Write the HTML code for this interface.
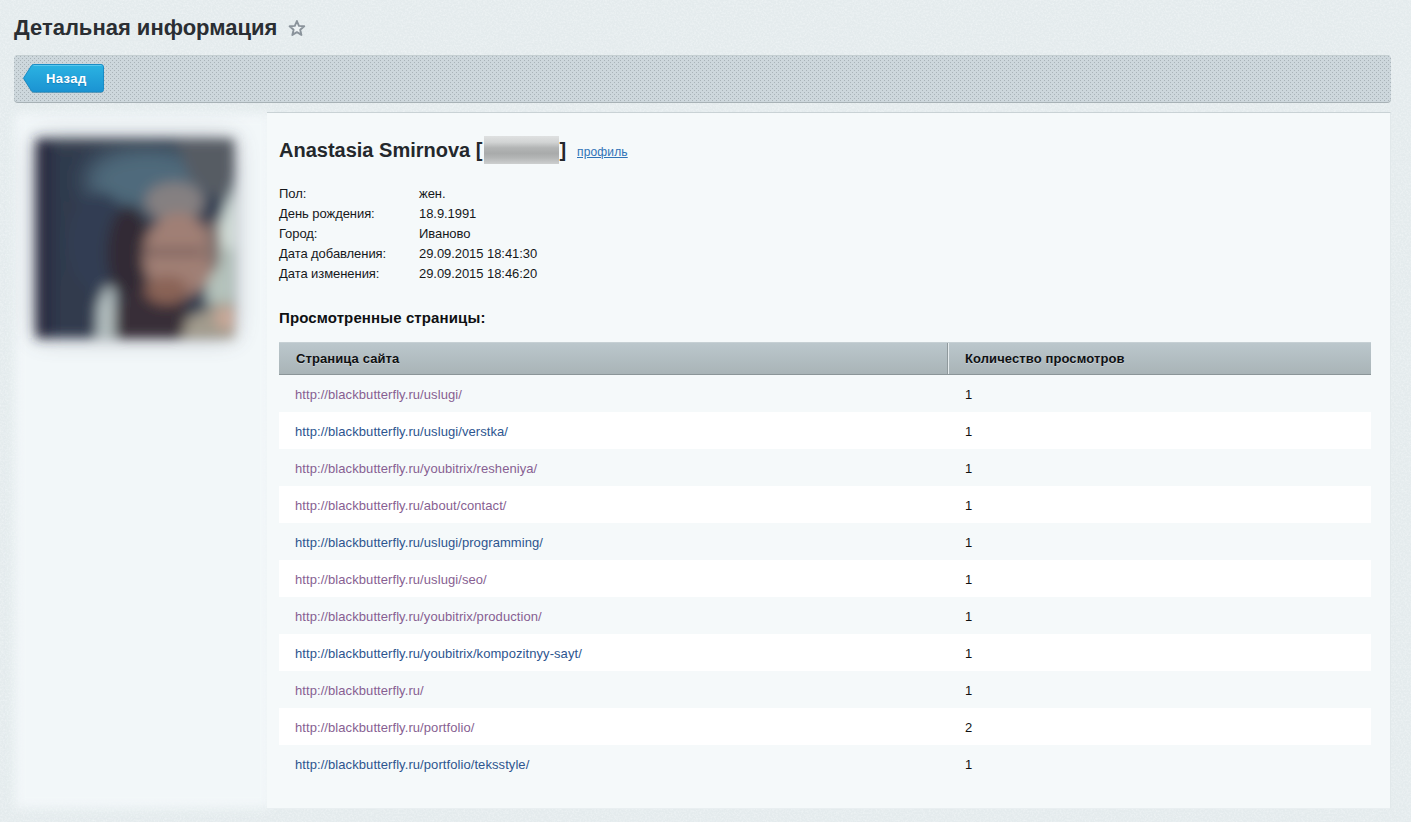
<!DOCTYPE html>
<html lang="ru">
<head>
<meta charset="utf-8">
<title>Детальная информация</title>
<style>
*{box-sizing:border-box;margin:0;padding:0}
html,body{width:1411px;height:822px;overflow:hidden}
body{background:#e4ebed;font-family:"Liberation Sans",Arial,sans-serif;font-size:13px;color:#000;position:relative}
a{text-decoration:none}
#title{position:absolute;left:14px;top:15px;font-size:22px;line-height:26px;font-weight:bold;color:#2a2e33;white-space:nowrap}
#star{position:absolute;left:287px;top:19px;width:20px;height:20px}
#toolbar{position:absolute;left:14px;top:55px;width:1377px;height:47px;border-radius:4px;overflow:hidden;
 background-color:#cdd7dc;box-shadow:0 1px 0 #a7b1b5}
#toolbar svg{position:absolute;left:0;top:0}
#back{position:absolute;left:23px;top:64px;width:81px;height:29px}
#back span{position:absolute;left:23px;top:7px;font-size:13px;line-height:16px;font-weight:bold;color:#fff;letter-spacing:.4px;text-shadow:0 1px 1px rgba(20,110,170,.6)}
#leftp{position:absolute;left:15px;top:114px;width:256px;height:694px;background:#f2f7f9;filter:blur(5.5px)}
#main{position:absolute;left:267px;top:112px;width:1124px;height:697px;background:#f5f9fa;border-top:1px solid #c9d2d5;border-right:1px solid #e1e8ea;border-bottom:1px solid #e9eff1}
#avatar{position:absolute;left:-5px;top:98px;width:280px;height:280px}
#name{position:absolute;left:279px;top:138px;font-size:20px;line-height:24px;font-weight:bold;color:#24282c;white-space:nowrap}
#idblur{position:absolute;left:484px;top:136px;width:75px;height:28px;background:linear-gradient(#dfe1e1 0,#d2d4d4 22%,#b3b5b5 42%,#a9abab 62%,#b4b6b6 78%,#cdcfcf 100%)}
#profile{position:absolute;left:577px;top:144px;font-size:12px;line-height:16px;letter-spacing:.15px;color:#2f73b7;text-decoration:underline}
.lbl,.val{position:absolute;font-size:13px;line-height:20px;color:#15181b;white-space:nowrap;letter-spacing:-.06px}
.lbl{left:279px}.val{left:419px}
#h2{position:absolute;left:279px;top:309px;font-size:15px;line-height:18px;font-weight:bold;letter-spacing:.12px;color:#0e1012;white-space:nowrap}
#thead{position:absolute;left:279px;top:342px;width:1092px;height:33px;background:linear-gradient(#bbc7cc,#a9b4b7);border-top:1px solid #c6d0d4;border-bottom:1px solid #8b9598}
#thead div{position:absolute;top:8px;font-size:13px;line-height:16px;font-weight:bold;letter-spacing:.1px;color:#0f1113;text-shadow:0 1px 0 rgba(255,255,255,.35);white-space:nowrap}
#sep{position:absolute;left:947px;top:343px;width:2px;height:31px;border-left:1px solid #8f999c;border-right:1px solid #e6ecee}
.row{position:absolute;left:279px;width:1092px;height:37px}
.row.w{background:#fff}
.row a{position:absolute;left:16px;top:12px;font-size:13px;line-height:16px;white-space:nowrap;letter-spacing:.075px}
.row span{position:absolute;left:686px;top:12px;font-size:13px;line-height:16px;color:#111}
.v{color:#875f92}.n{color:#2d558f}
</style>
</head>
<body>
<svg id="noise" width="1411" height="822" style="position:absolute;left:0;top:0"><defs><filter id="nz" x="0" y="0" width="100%" height="100%"><feTurbulence type="fractalNoise" baseFrequency=".55" numOctaves="2" seed="7" result="t"/><feColorMatrix type="matrix" values="0 0 0 0 .97  0 0 0 0 .99  0 0 0 0 1  1.6 0 0 0 -.62"/></filter></defs><rect width="1411" height="822" filter="url(#nz)" opacity=".5"/></svg>
<h1 id="title">Детальная информация</h1>
<svg id="star" viewBox="0 0 20 20"><path d="M9.90 2.00 L11.94 6.90 L17.22 7.32 L13.20 10.77 L14.43 15.93 L9.90 13.16 L5.37 15.93 L6.60 10.77 L2.58 7.32 L7.86 6.90Z" fill="#edf2f4" stroke="#8a939b" stroke-width="1.9" stroke-linejoin="round"/></svg>

<div id="toolbar"><svg width="1377" height="47"><defs><pattern id="dots" x="2" y="1" width="4" height="4" patternUnits="userSpaceOnUse"><rect x="0" y="0" width="1" height="1" fill="#a9b3b8"/><rect x="2" y="2" width="1" height="1" fill="#a9b3b8"/></pattern></defs><rect width="1377" height="47" fill="url(#dots)"/><rect width="1377" height="1" fill="#c5cfd2"/></svg></div>
<a id="back" href="#">
<svg width="81" height="30" viewBox="0 0 81 30" style="position:absolute;left:0;top:0">
<defs><linearGradient id="bg" x1="0" y1="0" x2="0" y2="1"><stop offset="0" stop-color="#2bb3e2"/><stop offset="1" stop-color="#1b93d2"/></linearGradient></defs>
<path d="M0.5 15.2 L8.5 2.6 Q9.3 1.5 10.8 1.5 H78 Q80.5 1.5 80.5 4 V26.5 Q80.5 29 78 29 H10.8 Q9.3 29 8.5 27.9 Z" fill="rgba(70,95,110,.35)"/>
<path d="M0.5 14.2 L8.5 1.6 Q9.3 0.5 10.8 0.5 H78 Q80.5 0.5 80.5 3 V25.5 Q80.5 28 78 28 H10.8 Q9.3 28 8.5 26.9 Z" fill="url(#bg)" stroke="#1a8cc6" stroke-width="1"/>
<path d="M10.5 1.5 H78.5" stroke="#5cc8ec" stroke-width="1" fill="none"/>
</svg>
<span>Назад</span></a>

<div id="leftp"></div>
<div id="main"></div>

<svg id="avatar" viewBox="-20 -20 280 280">
<defs>
<filter id="b8" x="-50%" y="-50%" width="200%" height="200%"><feGaussianBlur stdDeviation="9"/></filter>
<filter id="bh" x="-40%" y="-40%" width="180%" height="180%"><feGaussianBlur stdDeviation="13"/></filter>
<filter id="bl" x="-20%" y="-20%" width="140%" height="140%"><feGaussianBlur stdDeviation="6"/></filter>
<filter id="bi" x="-30%" y="-30%" width="160%" height="160%"><feGaussianBlur stdDeviation="3"/></filter>
<clipPath id="cp"><rect x="21" y="21.5" width="198" height="198"/></clipPath>
</defs>
<rect x="22" y="22" width="196" height="196" fill="#454a58" opacity=".42" filter="url(#bh)"/>
<g filter="url(#bl)">
<g clip-path="url(#cp)">
<rect x="0" y="0" width="240" height="240" fill="#303b4e"/>
<g filter="url(#bi)">
<rect x="-10" y="-10" width="46" height="260" fill="#2a2c40"/>
<ellipse cx="132" cy="62" rx="62" ry="34" fill="#506a7c" filter="url(#b8)"/>
<ellipse cx="85" cy="125" rx="32" ry="50" fill="#303d52"/>
<polygon points="40,0 240,0 240,30 205,36 150,28 40,30" fill="#3e4551"/>
<polygon points="160,20 240,10 224,50 206,84 176,62" fill="#565b64"/>
<polygon points="226,50 250,40 250,180 192,182 198,140 208,92" fill="#d6e2db"/>
<polygon points="192,130 250,130 250,190 190,186" fill="#b4c2bb"/>
<ellipse cx="160" cy="84" rx="30" ry="20" fill="#858081"/>
<ellipse cx="114" cy="135" rx="22" ry="48" fill="#332a35"/>
<ellipse cx="136" cy="205" rx="40" ry="36" fill="#372d37"/>
<ellipse cx="164" cy="138" rx="36" ry="43" fill="#a07f74"/>
<ellipse cx="152" cy="172" rx="22" ry="14" fill="#8a6357"/>
<ellipse cx="199" cy="126" rx="7" ry="28" fill="#7d6c69"/>
<rect x="128" y="131" width="60" height="6" fill="#6c5656"/>
<polygon points="80,250 82,186 92,168 100,172 98,250" fill="#b9c5c5"/>
<polygon points="160,250 172,200 205,184 250,188 250,250" fill="#a29b8d"/>
<ellipse cx="212" cy="200" rx="12" ry="11" fill="#c9a797"/>
</g>
</g>
</g>
</svg>

<div id="name">Anastasia Smirnova [<span style="display:inline-block;width:77px"></span>]</div>
<div id="idblur"></div>
<a id="profile" href="#">профиль</a>

<div class="lbl" style="top:184px">Пол:</div><div class="val" style="top:184px">жен.</div>
<div class="lbl" style="top:204px">День рождения:</div><div class="val" style="top:204px">18.9.1991</div>
<div class="lbl" style="top:224px">Город:</div><div class="val" style="top:224px">Иваново</div>
<div class="lbl" style="top:244px">Дата добавления:</div><div class="val" style="top:244px">29.09.2015 18:41:30</div>
<div class="lbl" style="top:264px">Дата изменения:</div><div class="val" style="top:264px">29.09.2015 18:46:20</div>

<div id="h2">Просмотренные страницы:</div>

<div id="thead"><div style="left:17px">Страница сайта</div><div style="left:686px">Количество просмотров</div></div>
<div id="sep"></div>

<div class="row" style="top:375px"><a class="v" href="#">http://blackbutterfly.ru/uslugi/</a><span>1</span></div>
<div class="row w" style="top:412px"><a class="n" href="#">http://blackbutterfly.ru/uslugi/verstka/</a><span>1</span></div>
<div class="row" style="top:449px"><a class="v" href="#">http://blackbutterfly.ru/youbitrix/resheniya/</a><span>1</span></div>
<div class="row w" style="top:486px"><a class="v" href="#">http://blackbutterfly.ru/about/contact/</a><span>1</span></div>
<div class="row" style="top:523px"><a class="n" href="#">http://blackbutterfly.ru/uslugi/programming/</a><span>1</span></div>
<div class="row w" style="top:560px"><a class="v" href="#">http://blackbutterfly.ru/uslugi/seo/</a><span>1</span></div>
<div class="row" style="top:597px"><a class="v" href="#">http://blackbutterfly.ru/youbitrix/production/</a><span>1</span></div>
<div class="row w" style="top:634px"><a class="n" href="#">http://blackbutterfly.ru/youbitrix/kompozitnyy-sayt/</a><span>1</span></div>
<div class="row" style="top:671px"><a class="v" href="#">http://blackbutterfly.ru/</a><span>1</span></div>
<div class="row w" style="top:708px"><a class="v" href="#">http://blackbutterfly.ru/portfolio/</a><span>2</span></div>
<div class="row" style="top:745px"><a class="n" href="#">http://blackbutterfly.ru/portfolio/teksstyle/</a><span>1</span></div>
</body>
</html>
